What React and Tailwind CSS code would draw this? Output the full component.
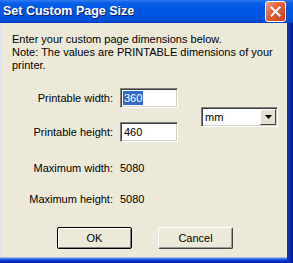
import React from 'react';

/**
 * Set Custom Page Size - Windows XP style dialog
 */
const sunken =
  'border border-t-[#808080] border-l-[#808080] border-b-white border-r-white shadow-[inset_1px_1px_0_#404040,inset_-1px_-1px_0_#d4d0c8] bg-white';

const LabeledRow = ({ label, children }) => (
  <div className="flex h-[20px] items-center">
    <span className="w-[101px] text-right">{label}</span>
    <div className="ml-[7px]">{children}</div>
  </div>
);

const Button = ({ children, isDefault }) => (
  <button
    className={`h-[22px] w-[75px] rounded-[2px] bg-[#ece9d8] text-[11px] text-black ${
      isDefault
        ? 'border border-black shadow-[inset_1px_1px_0_#fff,inset_-1px_-1px_0_#808080]'
        : 'border border-t-white border-l-white border-b-[#404040] border-r-[#404040] shadow-[inset_-1px_-1px_0_#9a9a9a]'
    }`}
  >
    {children}
  </button>
);

const App = () => {
  return (
    <div
      className="w-[293px] h-[263px] overflow-hidden flex flex-col text-[11px] text-black"
      style={{ fontFamily: '"Liberation Sans", Arial, sans-serif' }}
    >
      {/* Title bar */}
      <div className="h-[23px] shrink-0 flex items-center justify-between bg-[linear-gradient(to_bottom,#2e7cf0_0px,#0a5fe8_3px,#0058e6_8px,#0254e0_18px,#0048cc_22px,#003ab8_23px)]">
        <span className="pl-[3px] text-[12.5px] font-bold text-white leading-none [text-shadow:1px_1px_0_#0a1f6e]">
          Set Custom Page Size
        </span>
        <div className="mr-[7px] mt-[-1px] flex h-[21px] w-[21px] items-center justify-center rounded-[3px] border border-white bg-[linear-gradient(135deg,#f0a080_0%,#e2623a_40%,#c8401c_100%)]">
          <svg width="11" height="11" viewBox="0 0 11 11">
            <path d="M1.5 1.5 L9.5 9.5 M9.5 1.5 L1.5 9.5" stroke="white" strokeWidth="2" strokeLinecap="square" />
          </svg>
        </div>
      </div>

      <div className="flex flex-1">
        {/* Body */}
        <div className="flex flex-1 flex-col">
          <div className="flex-1 bg-[#ece9d8] bg-[linear-gradient(to_right,#d6e2f2_0px,#f2e6d6_3px,#ece9d8_5px)] pl-[12px] pt-[10px]">
            <p className="leading-[13px]">
              Enter your custom page dimensions below.
              <br />
              Note: The values are PRINTABLE dimensions of your
              <br />
              printer.
            </p>

            <div className="mt-[16px] flex">
              <div className="flex flex-col gap-[14px]">
                <LabeledRow label="Printable width:">
                  <div className={`${sunken} flex h-[20px] w-[58px] items-center pl-[2px]`}>
                    <span className="bg-[#316ac5] px-[1px] leading-[14px] text-white">360</span>
                  </div>
                </LabeledRow>
                <LabeledRow label="Printable height:">
                  <div className={`${sunken} flex h-[20px] w-[58px] items-center pl-[3px]`}>
                    460
                  </div>
                </LabeledRow>
              </div>

              <div className={`${sunken} ml-[23px] mt-[19px] flex h-[20px] w-[77px] items-center justify-between pl-[3px]`}>
                <span>mm</span>
                <div className="mr-[1px] flex h-[16px] w-[16px] items-center justify-center border border-t-white border-l-white border-b-[#404040] border-r-[#404040] bg-[#e4e1d4]">
                  <svg width="7" height="4" viewBox="0 0 7 4">
                    <path d="M0 0 H7 L3.5 4 Z" fill="black" />
                  </svg>
                </div>
              </div>
            </div>

            <div className="mt-[16px] flex flex-col gap-[11px]">
              <LabeledRow label="Maximum width:">5080</LabeledRow>
              <LabeledRow label="Maximum height:">5080</LabeledRow>
            </div>

            <div className="mt-[18px] ml-[45px] flex gap-[26px]">
              <Button isDefault>OK</Button>
              <Button>Cancel</Button>
            </div>
          </div>
          {/* Bottom frame */}
          <div className="h-[6px] shrink-0 bg-[linear-gradient(to_bottom,#c9d8f2_0px,#2a62e0_2px,#0831d9_4px,#001ea0_6px)]" />
        </div>
        {/* Right frame */}
        <div className="w-[6px] shrink-0 bg-[linear-gradient(to_right,#0836c8_0px,#0a2ab8_3px,#001a8a_6px)]" />
      </div>
    </div>
  );
};

export default App;
